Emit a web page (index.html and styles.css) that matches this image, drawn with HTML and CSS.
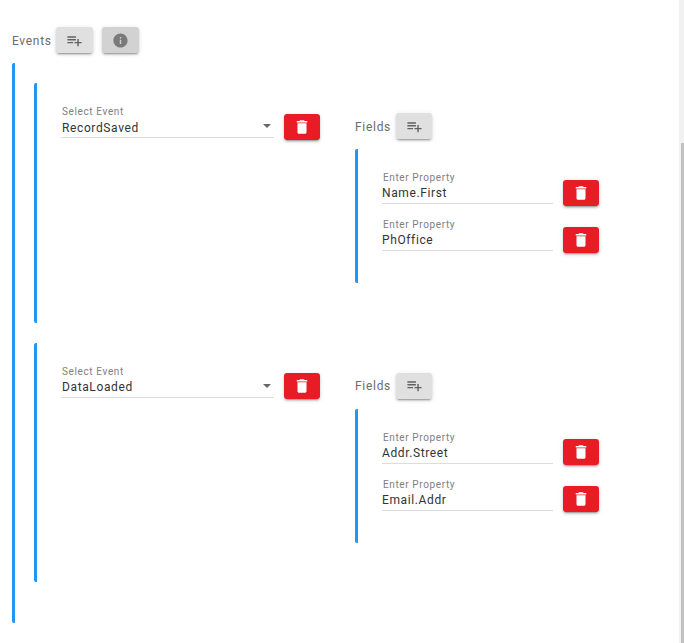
FILE: index.html
```html
<!DOCTYPE html>
<html lang="en">
<head>
    <meta charset="UTF-8">
    <meta name="viewport" content="width=device-width, initial-scale=1.0">
    <title>Events</title>
    <link rel="stylesheet" href="styles.css">
</head>
<body>
    <div class="page">
        <main class="content">
            <div class="events-header">
                <span class="section-label events-label">Events</span>
                <button class="btn btn-add events-add" type="button">
                    <svg class="icon-add" viewBox="0 0 24 24"><path d="M14 10H2v2h12v-2zm0-4H2v2h12V6zm4 8v-4h-2v4h-4v2h4v4h2v-4h4v-2h-4zM2 16h8v-2H2v2z"/></svg>
                </button>
                <button class="btn btn-info" type="button">
                    <svg class="icon-info" viewBox="0 0 24 24"><path d="M12 2C6.48 2 2 6.48 2 12s4.48 10 10 10 10-4.48 10-10S17.52 2 12 2zm1 15h-2v-6h2v6zm0-8h-2V7h2v2z"/></svg>
                </button>
            </div>

            <div class="event-list">
                <section class="event-card">
                    <div class="event-select">
                        <div class="field select-field">
                            <label class="field-label">Select Event</label>
                            <div class="field-value">RecordSaved<span class="caret"></span></div>
                        </div>
                        <button class="btn btn-delete" type="button">
                            <svg class="icon-delete" viewBox="0 0 24 24"><path d="M6 19c0 1.1.9 2 2 2h8c1.1 0 2-.9 2-2V7H6v12zM19 4h-3.500l-1-1h-5l-1 1H5v2h14V4z"/></svg>
                        </button>
                    </div>
                    <div class="fields-col">
                        <div class="fields-header">
                            <span class="section-label">Fields</span>
                            <button class="btn btn-add" type="button">
                                <svg class="icon-add" viewBox="0 0 24 24"><path d="M14 10H2v2h12v-2zm0-4H2v2h12V6zm4 8v-4h-2v4h-4v2h4v4h2v-4h4v-2h-4zM2 16h8v-2H2v2z"/></svg>
                            </button>
                        </div>
                        <div class="field-list">
                            <div class="field-row">
                                <div class="field property-field">
                                    <label class="field-label">Enter Property</label>
                                    <div class="field-value">Name.First</div>
                                </div>
                                <button class="btn btn-delete" type="button">
                                    <svg class="icon-delete" viewBox="0 0 24 24"><path d="M6 19c0 1.1.9 2 2 2h8c1.1 0 2-.9 2-2V7H6v12zM19 4h-3.500l-1-1h-5l-1 1H5v2h14V4z"/></svg>
                                </button>
                            </div>
                            <div class="field-row">
                                <div class="field property-field">
                                    <label class="field-label">Enter Property</label>
                                    <div class="field-value">PhOffice</div>
                                </div>
                                <button class="btn btn-delete" type="button">
                                    <svg class="icon-delete" viewBox="0 0 24 24"><path d="M6 19c0 1.1.9 2 2 2h8c1.1 0 2-.9 2-2V7H6v12zM19 4h-3.500l-1-1h-5l-1 1H5v2h14V4z"/></svg>
                                </button>
                            </div>
                        </div>
                    </div>
                </section>

                <section class="event-card">
                    <div class="event-select">
                        <div class="field select-field">
                            <label class="field-label">Select Event</label>
                            <div class="field-value">DataLoaded<span class="caret"></span></div>
                        </div>
                        <button class="btn btn-delete" type="button">
                            <svg class="icon-delete" viewBox="0 0 24 24"><path d="M6 19c0 1.1.9 2 2 2h8c1.1 0 2-.9 2-2V7H6v12zM19 4h-3.500l-1-1h-5l-1 1H5v2h14V4z"/></svg>
                        </button>
                    </div>
                    <div class="fields-col">
                        <div class="fields-header">
                            <span class="section-label">Fields</span>
                            <button class="btn btn-add" type="button">
                                <svg class="icon-add" viewBox="0 0 24 24"><path d="M14 10H2v2h12v-2zm0-4H2v2h12V6zm4 8v-4h-2v4h-4v2h4v4h2v-4h4v-2h-4zM2 16h8v-2H2v2z"/></svg>
                            </button>
                        </div>
                        <div class="field-list">
                            <div class="field-row">
                                <div class="field property-field">
                                    <label class="field-label">Enter Property</label>
                                    <div class="field-value">Addr.Street</div>
                                </div>
                                <button class="btn btn-delete" type="button">
                                    <svg class="icon-delete" viewBox="0 0 24 24"><path d="M6 19c0 1.1.9 2 2 2h8c1.1 0 2-.9 2-2V7H6v12zM19 4h-3.500l-1-1h-5l-1 1H5v2h14V4z"/></svg>
                                </button>
                            </div>
                            <div class="field-row">
                                <div class="field property-field">
                                    <label class="field-label">Enter Property</label>
                                    <div class="field-value">Email.Addr</div>
                                </div>
                                <button class="btn btn-delete" type="button">
                                    <svg class="icon-delete" viewBox="0 0 24 24"><path d="M6 19c0 1.1.9 2 2 2h8c1.1 0 2-.9 2-2V7H6v12zM19 4h-3.500l-1-1h-5l-1 1H5v2h14V4z"/></svg>
                                </button>
                            </div>
                        </div>
                    </div>
                </section>
            </div>
        </main>
        <div class="scrollbar"><div class="scrollbar-thumb"></div></div>
    </div>
</body>
</html>
```

FILE: styles.css
```css
html, body {
    margin: 0;
    height: 100%;
    overflow: hidden;
    background-color: #fff;
}

body {
    font-family: Roboto, "Liberation Sans", sans-serif;
}

.page {
    display: flex;
    height: 643px;
    overflow: hidden;
}

.content {
    flex: 1;
    padding: 27px 0 0 12px;
}

.scrollbar {
    width: 5px;
    background-color: #f1f1f1;
    display: flex;
    justify-content: flex-end;
}

.scrollbar-thumb {
    width: 3px;
    height: 500px;
    margin-top: 143px;
    background-color: #c1c1c1;
}

.events-header,
.fields-header {
    display: flex;
    align-items: center;
}

.section-label {
    padding-top: 1px;
    font-size: 12px;
    letter-spacing: 0.7px;
    color: #6b6b6b;
}

.events-label {
    width: 39px;
}

.btn {
    display: flex;
    align-items: center;
    justify-content: center;
    width: 36px;
    height: 26px;
    padding: 0;
    border: none;
    border-radius: 3px;
    box-shadow: 0 3px 1px -2px rgba(0, 0, 0, 0.2), 0 2px 2px 0 rgba(0, 0, 0, 0.14), 0 1px 5px 0 rgba(0, 0, 0, 0.12);
    cursor: pointer;
}

.btn svg {
    display: block;
}

.btn-add {
    background-color: #e0e0e0;
    margin-left: 5px;
}

.events-add {
    width: 37px;
}

.btn-info {
    width: 37px;
    margin-left: 9px;
    background-color: #d2d2d2;
}

.btn-delete {
    flex-shrink: 0;
    background-color: #e81c24;
}

.icon-add {
    width: 17px;
    height: 17px;
    fill: #616161;
}

.icon-info {
    width: 17px;
    height: 17px;
    fill: #7a7a7a;
}

.icon-delete {
    width: 18px;
    height: 18px;
    fill: #fff;
}

.event-list {
    height: 540px;
    margin-top: 10px;
    padding: 20px 0 0 19px;
    border-left: 3px solid #2196f3;
    border-radius: 2px;
}

.event-card {
    display: flex;
    height: 239.6px;
    margin-bottom: 20px;
    padding-left: 24px;
    border-left: 3px solid #2196f3;
    border-radius: 2px;
    box-sizing: border-box;
}

.event-select {
    display: flex;
    align-items: flex-start;
    gap: 10px;
    padding-top: 21px;
}

.fields-col {
    margin-left: 35px;
    padding-top: 30px;
}

.fields-header {
    width: 77px;
}

.fields-header .section-label {
    width: 36px;
}

.field-list {
    display: flex;
    flex-direction: column;
    gap: 5px;
    height: 134px;
    box-sizing: border-box;
    margin-top: 10px;
    padding: 21px 0 0 24px;
    border-left: 3px solid #2196f3;
    border-radius: 2px;
}

.field-row {
    display: flex;
    align-items: flex-start;
    gap: 10px;
    height: 42px;
}

.field {
    display: flex;
    flex-direction: column;
    border-bottom: 1px solid #dcdcdc;
}

.select-field {
    width: 213px;
}

.select-field + .btn-delete {
    margin-top: 9.6px;
}

.property-field {
    width: 171px;
    height: 33px;
}

.property-field + .btn-delete {
    margin-top: 9.6px;
}

.field-label {
    padding-left: 1px;
    font-size: 10px;
    line-height: 15px;
    letter-spacing: 0.62px;
    color: #808080;
}

.field-value {
    display: flex;
    align-items: center;
    justify-content: space-between;
    height: 17px;
    padding: 0 0 1px 1px;
    font-size: 12px;
    letter-spacing: 0.62px;
    color: #333;
}

.property-field .field-value {
    height: 16px;
    padding: 0;
}

.caret {
    width: 0;
    height: 0;
    margin: -3px 3px 0 0;
    border-left: 4px solid transparent;
    border-right: 4px solid transparent;
    border-top: 4px solid #666;
}
```
